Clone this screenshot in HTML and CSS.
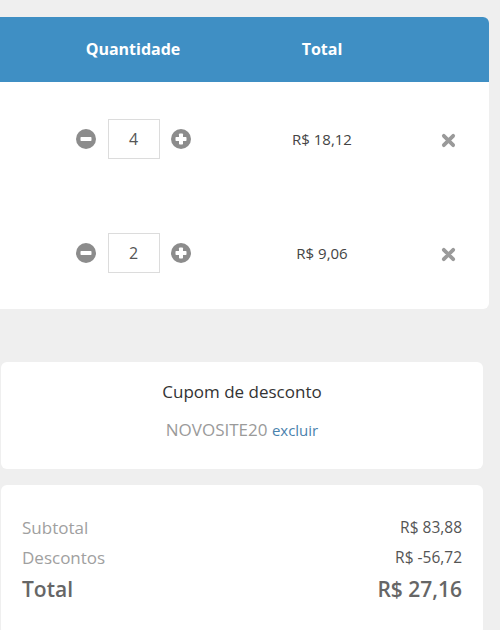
FILE: index.html
```html
<!DOCTYPE html>
<html lang="pt-BR">
<head>
<meta charset="utf-8">
<title>Carrinho</title>
<link rel="stylesheet" href="styles.css">
</head>
<body>
<div class="page">
  <section class="cart">
    <div class="cart-head">
      <div class="col-qty">Quantidade</div>
      <div class="col-total">Total</div>
      <div class="col-x"></div>
    </div>
    <div class="cart-row">
      <div class="col-qty">
        <div class="qty">
          <svg class="qbtn" viewBox="0 0 20 20" width="20" height="20"><circle cx="10" cy="10" r="10" fill="#8c8c8c"/><rect x="4.5" y="8" width="11" height="4" rx="0.8" fill="#fff"/></svg>
          <div class="qinput">4</div>
          <svg class="qbtn" viewBox="0 0 20 20" width="20" height="20"><circle cx="10" cy="10" r="10" fill="#8c8c8c"/><rect x="4.5" y="8" width="11" height="4" rx="0.8" fill="#fff"/><rect x="8" y="4.5" width="4" height="11" rx="0.8" fill="#fff"/></svg>
        </div>
      </div>
      <div class="col-total price">R$ 18,12</div>
      <div class="col-x">
        <svg viewBox="0 0 16 16" width="15" height="15"><path d="M3 3L13 13M13 3L3 13" stroke="#9a9a9a" stroke-width="4" stroke-linecap="round"/></svg>
      </div>
    </div>
    <div class="cart-row last">
      <div class="col-qty">
        <div class="qty">
          <svg class="qbtn" viewBox="0 0 20 20" width="20" height="20"><circle cx="10" cy="10" r="10" fill="#8c8c8c"/><rect x="4.5" y="8" width="11" height="4" rx="0.8" fill="#fff"/></svg>
          <div class="qinput">2</div>
          <svg class="qbtn" viewBox="0 0 20 20" width="20" height="20"><circle cx="10" cy="10" r="10" fill="#8c8c8c"/><rect x="4.5" y="8" width="11" height="4" rx="0.8" fill="#fff"/><rect x="8" y="4.5" width="4" height="11" rx="0.8" fill="#fff"/></svg>
        </div>
      </div>
      <div class="col-total price">R$ 9,06</div>
      <div class="col-x">
        <svg viewBox="0 0 16 16" width="15" height="15"><path d="M3 3L13 13M13 3L3 13" stroke="#9a9a9a" stroke-width="4" stroke-linecap="round"/></svg>
      </div>
    </div>
  </section>

  <section class="box coupon">
    <div class="coupon-title">Cupom de desconto</div>
    <div class="coupon-code">NOVOSITE20 <a class="coupon-remove" href="#">excluir</a></div>
  </section>

  <section class="box summary">
    <div class="sum-row"><span class="sum-label">Subtotal</span><span class="sum-value">R$ 83,88</span></div>
    <div class="sum-row"><span class="sum-label">Descontos</span><span class="sum-value">R$ -56,72</span></div>
    <div class="sum-row total"><span class="sum-label">Total</span><span class="sum-value">R$ 27,16</span></div>
  </section>
</div>
</body>
</html>
```

FILE: styles.css
```css
html, body {
  margin: 0;
  padding: 0;
}
body {
  background: #efefef;
  font-family: "Open Sans", "DejaVu Sans", sans-serif;
  color: #444;
}
.page {
  padding-top: 17px;
  display: flex;
  flex-direction: column;
  align-items: flex-start;
}
.cart {
  width: 489px;
  background: #fff;
  border-radius: 0 6px 6px 0;
  overflow: hidden;
}
.cart-head,
.cart-row {
  display: grid;
  grid-template-columns: 266px 112px 1fr;
  align-items: center;
}
.cart-head {
  height: 65px;
  background: #3f8fc4;
  color: #fff;
  font-weight: 700;
  font-size: 16px;
  padding-bottom: 2px;
  box-sizing: border-box;
}
.col-qty,
.col-total {
  display: flex;
  justify-content: center;
}
.col-x {
  display: flex;
  justify-content: flex-end;
  padding-right: 33px;
  padding-top: 3px;
}
.cart-row {
  height: 114px;
}
.cart-row.last {
  height: 113px;
}
.qty {
  display: flex;
  align-items: center;
}
.qbtn {
  display: block;
}
.qinput {
  width: 52px;
  height: 40px;
  box-sizing: border-box;
  border: 1px solid #dcdcdc;
  margin: 0 11px 0 12px;
  display: flex;
  align-items: center;
  justify-content: center;
  font-size: 16px;
  color: #555;
}
.price {
  font-size: 15px;
  color: #444;
}
.box {
  background: #fff;
  border-radius: 6px;
  width: 482px;
  margin-left: 1px;
  box-sizing: border-box;
}
.coupon {
  margin-top: 53px;
  height: 107px;
  padding-top: 18px;
  text-align: center;
}
.coupon-title {
  font-size: 17px;
  line-height: 24px;
  color: #333;
}
.coupon-code {
  margin-top: 14px;
  font-size: 17px;
  line-height: 24px;
  color: #9a9a9a;
}
.coupon-remove {
  color: #4a82ad;
  font-size: 15px;
  text-decoration: none;
}
.summary {
  margin-top: 16px;
  height: 150px;
  padding: 27px 21px 0 21px;
}
.sum-row {
  display: flex;
  justify-content: space-between;
  align-items: center;
  height: 30px;
}
.sum-row.total {
  height: 34px;
}
.sum-label {
  font-size: 17px;
  color: #a0a0a0;
}
.sum-value {
  font-size: 15.5px;
  color: #555;
}
.sum-row.total .sum-label,
.sum-row.total .sum-value {
  font-size: 21px;
  font-weight: 600;
  color: #666;
}
```
